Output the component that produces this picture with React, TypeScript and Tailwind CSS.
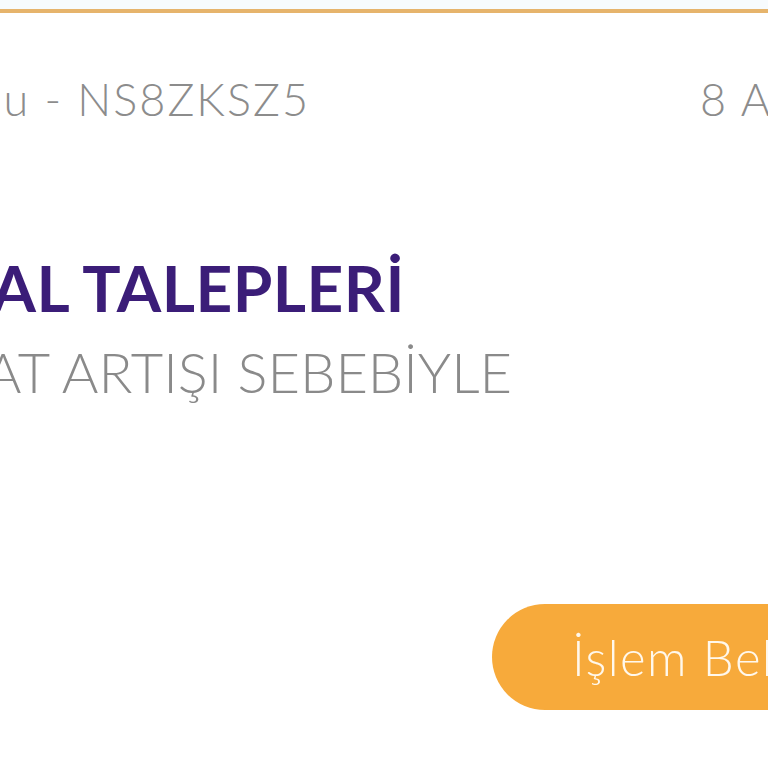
import React from "react";

const font = { fontFamily: "Lato, 'Noto Sans', 'Liberation Sans', sans-serif" };

export default function App() {
  return (
    <div className="w-[768px] h-[768px] overflow-hidden bg-white" style={font}>
      {/* top edge of the card */}
      <div className="h-[9px] bg-[#f7fbfd]" />
      <div className="h-[4px] bg-[#e6b46c]" />

      <div className="flex flex-col">
        {/* status + code / date */}
        <div className="mt-[64px] flex items-start whitespace-nowrap text-[45px] leading-none font-light tracking-[2px] text-[#8c8c8c]">
          <div className="w-[310px] shrink-0 flex justify-end">
            <span>Sorumlu - NS8ZKSZ5</span>
          </div>
          <div className="ml-[390px] shrink-0">
            <span>8 Ağustos 2023</span>
          </div>
        </div>

        {/* title */}
        <div className="mt-[134px] w-[405px] flex justify-end whitespace-nowrap">
          <span className="text-[64px] leading-none font-bold tracking-[0.5px] text-[#3b1d78]">
            FİNANSAL TALEPLERİ
          </span>
        </div>

        {/* subtitle */}
        <div className="mt-[24px] w-[512px] flex justify-end whitespace-nowrap">
          <span className="text-[56px] leading-none font-light text-[#8a8a8a]">
            FİYAT ARTIŞI SEBEBİYLE
          </span>
        </div>

        {/* action button */}
        <div className="mt-[204px] pl-[492px] flex">
          <button className="h-[106px] w-[420px] shrink-0 rounded-full bg-[#f7aa3b] pl-[80px] flex items-center whitespace-nowrap">
            <span className="text-[49px] leading-none font-light tracking-[1.5px] text-[#fff8ec]">
              İşlem Bekleniyor
            </span>
          </button>
        </div>
      </div>
    </div>
  );
}
